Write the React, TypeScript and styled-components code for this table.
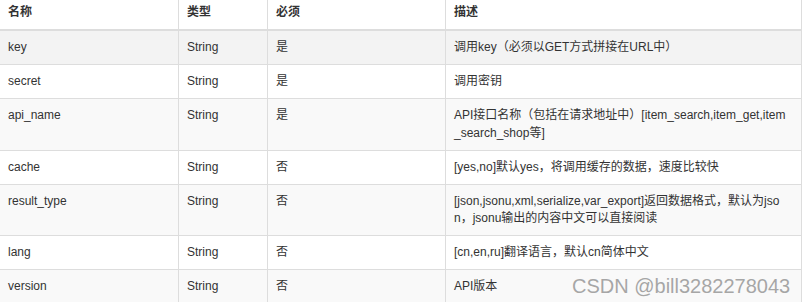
import styled, { createGlobalStyle } from "styled-components";

const GlobalStyle = createGlobalStyle`
  html, body {
    margin: 0;
    padding: 0;
    background: #fff;
    overflow: hidden;
  }
  body {
    font-family: "Liberation Sans", Arial, "Noto Sans CJK SC", sans-serif;
  }
`;

const Page = styled.div`
  position: relative;
  width: 804px;
  height: 302px;
  overflow: hidden;
`;

const Table = styled.table`
  width: 802px;
  table-layout: fixed;
  border-collapse: separate;
  border-spacing: 0;
  font-size: 12px;
  line-height: 1.428571;
  color: #333;
`;

const HeadCell = styled.th<{ $first?: boolean; $last?: boolean }>`
  text-align: left;
  font-weight: 700;
  padding: 4px 8px 8px;
  border-bottom: 2px solid #ddd;
  border-left: ${(p) => (p.$first ? "none" : "1px solid #ddd")};
  border-right: ${(p) => (p.$last ? "1px solid #ddd" : "none")};
  vertical-align: top;
`;

const Row = styled.tr<{ $shade?: string }>`
  background: ${(p) => p.$shade || "#fff"};
`;

const Cell = styled.td<{ $first?: boolean; $last?: boolean }>`
  padding: 8px ${(p) => (p.$last ? "12px" : "8px")} 8px 8px;
  vertical-align: top;
  border-bottom: 1px solid #ddd;
  border-left: ${(p) => (p.$first ? "none" : "1px solid #ddd")};
  border-right: ${(p) => (p.$last ? "1px solid #ddd" : "none")};
  word-break: break-all;
`;

const Watermark = styled.div`
  position: absolute;
  left: 572px;
  top: 276px;
  font-family: "Liberation Sans", Arial, sans-serif;
  font-size: 20px;
  line-height: 1;
  color: #a6a6a6;
  text-shadow: 0 0 1px #fff;
  white-space: nowrap;
`;

const rows = [
  { name: "key", type: "String", req: "是", desc: "调用key（必须以GET方式拼接在URL中）", shade: "#f3f3f3" },
  { name: "secret", type: "String", req: "是", desc: "调用密钥" },
  {
    name: "api_name",
    type: "String",
    req: "是",
    desc: "API接口名称（包括在请求地址中）[item_search,item_get,item_search_shop等]",
    shade: "#f9f9f9",
  },
  { name: "cache", type: "String", req: "否", desc: "[yes,no]默认yes，将调用缓存的数据，速度比较快" },
  {
    name: "result_type",
    type: "String",
    req: "否",
    desc: "[json,jsonu,xml,serialize,var_export]返回数据格式，默认为json，jsonu输出的内容中文可以直接阅读",
    shade: "#f9f9f9",
  },
  { name: "lang", type: "String", req: "否", desc: "[cn,en,ru]翻译语言，默认cn简体中文" },
  { name: "version", type: "String", req: "否", desc: "API版本", shade: "#f9f9f9" },
];

export default function App() {
  return (
    <Page>
      <GlobalStyle />
      <Table>
        <colgroup>
          <col style={{ width: 178 }} />
          <col style={{ width: 89 }} />
          <col style={{ width: 178 }} />
          <col style={{ width: 357 }} />
        </colgroup>
        <thead>
          <tr>
            <HeadCell $first>名称</HeadCell>
            <HeadCell>类型</HeadCell>
            <HeadCell>必须</HeadCell>
            <HeadCell $last>描述</HeadCell>
          </tr>
        </thead>
        <tbody>
          {rows.map((r) => (
            <Row key={r.name} $shade={r.shade}>
              <Cell $first>{r.name}</Cell>
              <Cell>{r.type}</Cell>
              <Cell>{r.req}</Cell>
              <Cell $last>{r.desc}</Cell>
            </Row>
          ))}
        </tbody>
      </Table>
      <Watermark>CSDN @bill3282278043</Watermark>
    </Page>
  );
}
